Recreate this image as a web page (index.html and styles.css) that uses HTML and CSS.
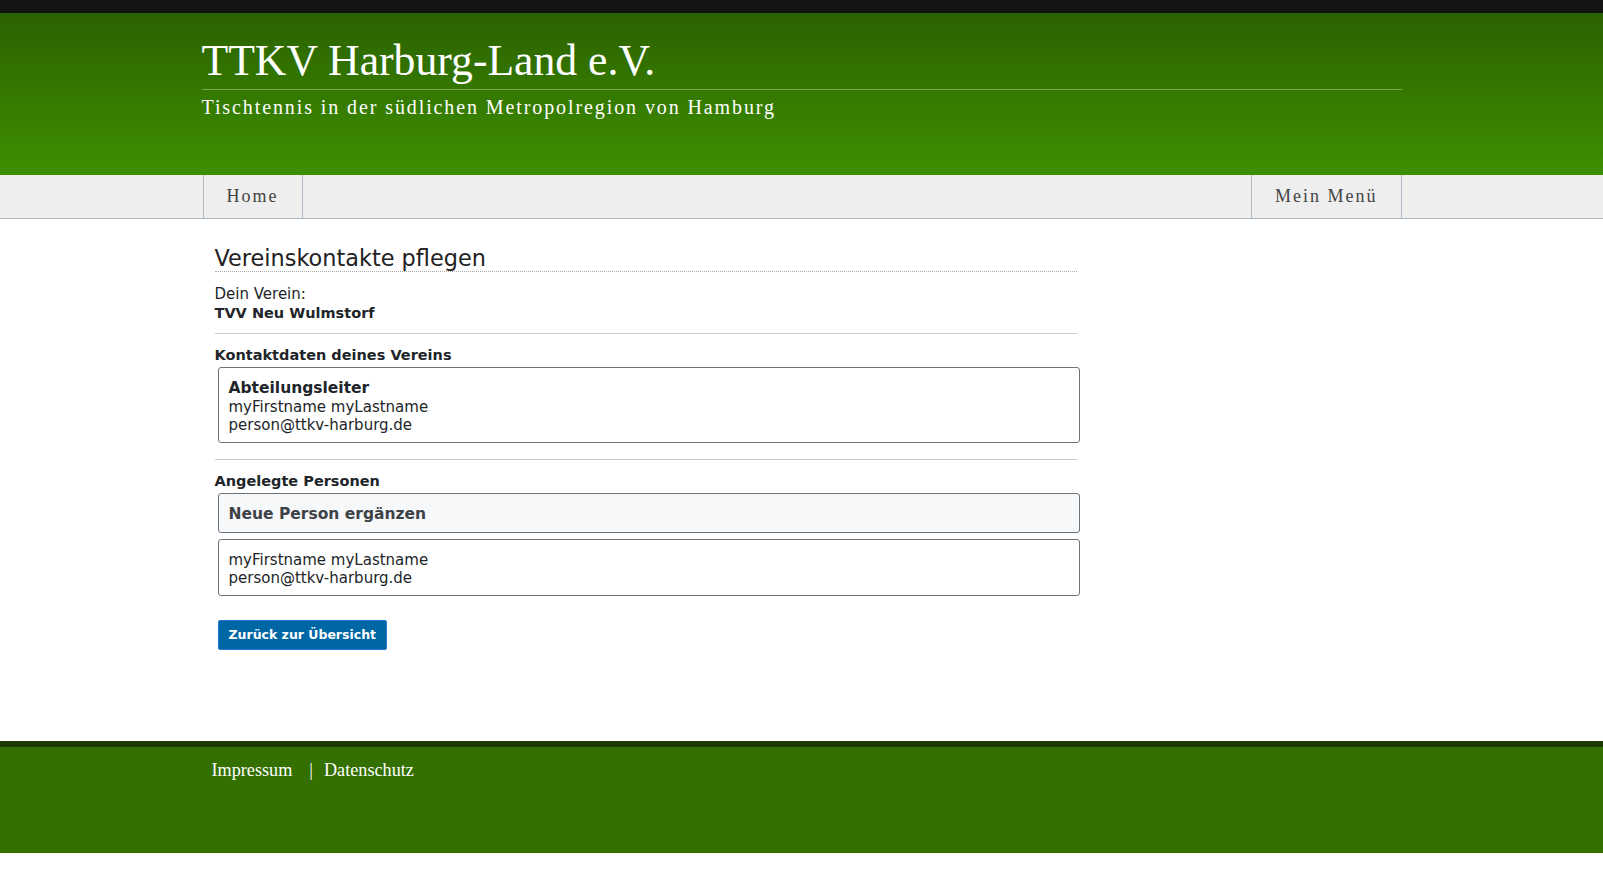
FILE: index.html
```html
<!DOCTYPE html>
<html lang="de">
<head>
<meta charset="utf-8">
<title>TTKV Harburg-Land e.V.</title>
<link rel="stylesheet" href="styles.css">
</head>
<body>
<div class="topbar"></div>
<header class="site-header">
  <div class="container">
    <h1 class="site-title">TTKV Harburg-Land e.V.</h1>
    <p class="site-subtitle">Tischtennis in der südlichen Metropolregion von Hamburg</p>
  </div>
</header>
<nav class="site-nav">
  <div class="container nav-inner">
    <a class="nav-tab" href="#">Home</a>
    <a class="nav-tab nav-tab-right" href="#">Mein Menü</a>
  </div>
</nav>
<main class="container">
  <div class="content">
    <h2 class="page-title">Vereinskontakte pflegen</h2>
    <p class="club">Dein Verein:<br><strong>TVV Neu Wulmstorf</strong></p>
    <hr class="sep">
    <h3 class="label">Kontaktdaten deines Vereins</h3>
    <div class="card card-contact">
      <div class="card-title">Abteilungsleiter</div>
      <div>myFirstname myLastname</div>
      <div>person@ttkv-harburg.de</div>
    </div>
    <hr class="sep sep-2">
    <h3 class="label">Angelegte Personen</h3>
    <div class="card card-add">Neue Person ergänzen</div>
    <div class="card card-person">
      <div>myFirstname myLastname</div>
      <div>person@ttkv-harburg.de</div>
    </div>
    <a class="btn" href="#">Zurück zur Übersicht</a>
  </div>
</main>
<footer class="site-footer">
  <div class="container footer-inner">
    <a href="#">Impressum</a><span class="footer-sep">|</span><a href="#">Datenschutz</a>
  </div>
</footer>
</body>
</html>
```
FILE: styles.css
```css
* { box-sizing: border-box; }
html, body { margin: 0; padding: 0; background: #fff; }
body {
  font-family: "DejaVu Sans", Verdana, sans-serif;
  font-size: 15px;
  line-height: 18.5px;
  color: #212529;
}
.container { width: 1200px; margin: 0 auto; }

.topbar { height: 13px; background: #141414; }

.site-header {
  height: 162px;
  background: linear-gradient(to bottom, #2b6200 0%, #3e8f00 100%);
  padding-top: 26px;
}
.site-title {
  margin: 0;
  font-family: "Liberation Serif", "Times New Roman", serif;
  font-weight: normal;
  font-size: 43.7px;
  line-height: 43px;
  color: #fff;
  padding-bottom: 7px;
  border-bottom: 1px solid rgba(255,255,255,0.35);
}
.site-subtitle {
  margin: 6px 0 0;
  font-family: "Liberation Serif", "Times New Roman", serif;
  font-size: 20px;
  line-height: 22px;
  letter-spacing: 1.9px;
  color: #fff;
}

.site-nav {
  background: #eeeeee;
  border-bottom: 1px solid #aebbc6;
}
.nav-inner { display: flex; justify-content: space-between; height: 43px; }
.nav-tab {
  display: block;
  height: 43px;
  line-height: 43px;
  padding: 0 23px;
  border-left: 1px solid #aebbc6;
  border-right: 1px solid #aebbc6;
  font-family: "Liberation Serif", "Times New Roman", serif;
  font-size: 18px;
  letter-spacing: 2px;
  color: #444;
  text-decoration: none;
}
.nav-tab:first-child { margin-left: 1px; }

.content {
  width: 862px;
  margin-left: 13px;
  padding-bottom: 91px;
}
.page-title {
  margin: 27px 0 0;
  font-size: 22.4px;
  line-height: 25px;
  font-weight: normal;
  color: #222;
  border-bottom: 1px dotted #aaa;
}
.club { margin: 13px 0 0; }
.club strong { font-weight: bold; font-size: 14.5px; }
.sep {
  margin: 11px 0 0;
  border: 0;
  border-top: 1px solid #cccccc;
  height: 0;
}
.sep-2 { margin-top: 16px; }
.label {
  margin: 12px 0 0;
  font-size: 14.5px;
  line-height: 18px;
  font-weight: bold;
}
.card {
  margin: 3px 0 0 3px;
  width: 862px;
  border: 1px solid #6c757d;
  border-radius: 3px;
  padding: 10px 10px;
}
.card-contact { padding-top: 12px; padding-bottom: 7px; }
.card-title { font-weight: bold; font-size: 15.5px; line-height: 17.5px; }
.card-add {
  background: #f7f8fa;
  font-weight: bold;
  font-size: 15.5px;
  line-height: 18px;
  color: #3d4247;
  padding-top: 11px;
  padding-bottom: 9px;
}
.card-person { margin-top: 6px; padding-top: 11px; padding-bottom: 7px; }
.btn {
  display: inline-block;
  margin: 24px 0 0 3px;
  height: 30px;
  line-height: 28px;
  padding: 0 10px;
  background: #0067a5;
  border: 1px solid #1f7ad4;
  border-radius: 2px;
  color: #fff;
  font-weight: bold;
  font-size: 12.5px;
  text-decoration: none;
  vertical-align: top;
}

.site-footer {
  border-top: 6px solid #1c3a04;
  background: #337000;
  height: 112px;
  padding-top: 13px;
}
.footer-inner {
  display: flex;
  padding-left: 10px;
  font-family: "Liberation Serif", "Times New Roman", serif;
  font-size: 18.2px;
  line-height: 20px;
  color: #fff;
}
.footer-inner a { color: #fff; text-decoration: none; }
.footer-sep { margin: 0 11px 0 17px; }
```
